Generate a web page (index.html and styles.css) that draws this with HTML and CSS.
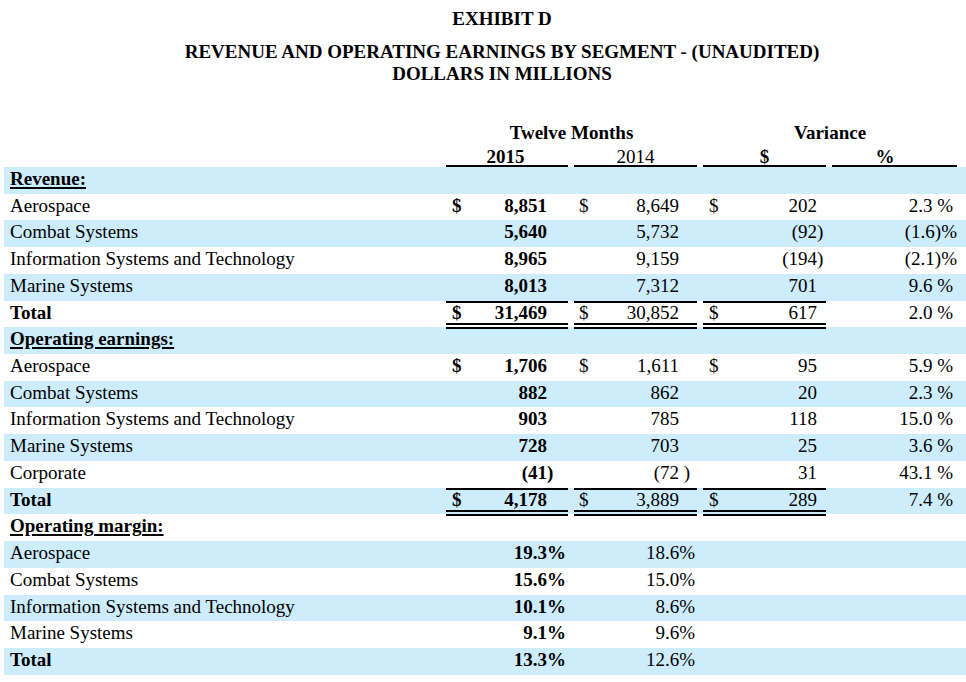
FILE: index.html
```html
<!DOCTYPE html>
<html lang="en">
<head>
<meta charset="utf-8">
<title>Exhibit D</title>
<link rel="stylesheet" href="styles.css">
</head>
<body>
<div class="page">
  <header class="title">
    <div class="exhibit">EXHIBIT D</div>
    <div class="sub">REVENUE AND OPERATING EARNINGS BY SEGMENT - (UNAUDITED)<br>DOLLARS IN MILLIONS</div>
  </header>

  <div class="table">
    <div class="hrow hrow1">
      <div class="h-tm">Twelve Months</div>
      <div class="h-var">Variance</div>
    </div>
    <div class="hrow hrow2">
      <div class="hc c1 h15">2015</div>
      <div class="hc c2 h14">2014</div>
      <div class="hc c3 hd">$</div>
      <div class="hc c4 hp">%</div>
    </div>

    <div class="rows">
      <div class="row"><div class="lab sec">Revenue:</div></div>
      <div class="row"><div class="lab">Aerospace</div><div class="v c1"><span>$</span><span class="n">8,851</span></div><div class="v c2"><span>$</span><span class="n">8,649</span></div><div class="v c3"><span>$</span><span class="n">202</span></div><div class="v c4"><span class="n">2.3 %</span></div></div>
      <div class="row"><div class="lab">Combat Systems</div><div class="v c1"><span class="n">5,640</span></div><div class="v c2"><span class="n">5,732</span></div><div class="v c3"><span class="n">(92<span class="rp">)</span></span></div><div class="v c4 hang"><span class="n">(1.6)%</span></div></div>
      <div class="row"><div class="lab">Information Systems and Technology</div><div class="v c1"><span class="n">8,965</span></div><div class="v c2"><span class="n">9,159</span></div><div class="v c3"><span class="n">(194<span class="rp">)</span></span></div><div class="v c4 hang"><span class="n">(2.1)%</span></div></div>
      <div class="row"><div class="lab">Marine Systems</div><div class="v c1"><span class="n">8,013</span></div><div class="v c2"><span class="n">7,312</span></div><div class="v c3"><span class="n">701</span></div><div class="v c4"><span class="n">9.6 %</span></div></div>
      <div class="row tot"><div class="lab b">Total</div><div class="v c1"><span>$</span><span class="n">31,469</span></div><div class="v c2"><span>$</span><span class="n">30,852</span></div><div class="v c3"><span>$</span><span class="n">617</span></div><div class="v c4"><span class="n">2.0 %</span></div></div>

      <div class="row"><div class="lab sec">Operating earnings:</div></div>
      <div class="row"><div class="lab">Aerospace</div><div class="v c1"><span>$</span><span class="n">1,706</span></div><div class="v c2"><span>$</span><span class="n">1,611</span></div><div class="v c3"><span>$</span><span class="n">95</span></div><div class="v c4"><span class="n">5.9 %</span></div></div>
      <div class="row"><div class="lab">Combat Systems</div><div class="v c1"><span class="n">882</span></div><div class="v c2"><span class="n">862</span></div><div class="v c3"><span class="n">20</span></div><div class="v c4"><span class="n">2.3 %</span></div></div>
      <div class="row"><div class="lab">Information Systems and Technology</div><div class="v c1"><span class="n">903</span></div><div class="v c2"><span class="n">785</span></div><div class="v c3"><span class="n">118</span></div><div class="v c4"><span class="n">15.0 %</span></div></div>
      <div class="row"><div class="lab">Marine Systems</div><div class="v c1"><span class="n">728</span></div><div class="v c2"><span class="n">703</span></div><div class="v c3"><span class="n">25</span></div><div class="v c4"><span class="n">3.6 %</span></div></div>
      <div class="row"><div class="lab">Corporate</div><div class="v c1"><span class="n">(41<span class="rp">)</span></span></div><div class="v c2"><span class="n">(72<span class="rp2">&nbsp;)</span></span></div><div class="v c3"><span class="n">31</span></div><div class="v c4"><span class="n">43.1 %</span></div></div>
      <div class="row tot"><div class="lab b">Total</div><div class="v c1"><span>$</span><span class="n">4,178</span></div><div class="v c2"><span>$</span><span class="n">3,889</span></div><div class="v c3"><span>$</span><span class="n">289</span></div><div class="v c4"><span class="n">7.4 %</span></div></div>

      <div class="row"><div class="lab sec">Operating margin:</div></div>
      <div class="row pct"><div class="lab">Aerospace</div><div class="v c1"><span class="n">19.3%</span></div><div class="v c2"><span class="n">18.6%</span></div></div>
      <div class="row pct"><div class="lab">Combat Systems</div><div class="v c1"><span class="n">15.6%</span></div><div class="v c2"><span class="n">15.0%</span></div></div>
      <div class="row pct"><div class="lab">Information Systems and Technology</div><div class="v c1"><span class="n">10.1%</span></div><div class="v c2"><span class="n">8.6%</span></div></div>
      <div class="row pct"><div class="lab">Marine Systems</div><div class="v c1"><span class="n">9.1%</span></div><div class="v c2"><span class="n">9.6%</span></div></div>
      <div class="row pct"><div class="lab b">Total</div><div class="v c1"><span class="n">13.3%</span></div><div class="v c2"><span class="n">12.6%</span></div></div>
    </div>
  </div>
</div>
</body>
</html>
```

FILE: styles.css
```css
html, body {
  margin: 0;
  padding: 0;
  background: #ffffff;
}

body {
  font-family: "Liberation Serif", "Times New Roman", serif;
  font-size: 19px;
  color: #000000;
}

.page {
  width: 966px;
  padding: 0 0 0 4px;
  box-sizing: border-box;
}

/* ---------- title ---------- */
.title {
  padding-top: 8px;
  padding-left: 34px;
  text-align: center;
  font-weight: bold;
  line-height: 22px;
}

.exhibit {
  margin-bottom: 11px;
}

/* ---------- table ---------- */
.table {
  margin-top: 37px;
}

.hrow,
.row {
  display: grid;
  grid-template-columns: 442px 122px 6px 123px 6px 123px 6px 125px;
}

.hrow1 {
  height: 22px;
  line-height: 22px;
  font-weight: bold;
  text-align: center;
}

.h-tm {
  grid-column: 2 / 5;
}

.h-var {
  grid-column: 6 / 9;
}

.hrow2 {
  margin-top: 5px;
  line-height: 16px;
}

.hc {
  text-align: center;
  border-bottom: 2px solid #000000;
}

.h15 {
  font-weight: bold;
  padding-right: 3px;
}

.hd {
  font-weight: bold;
}

.hp {
  font-weight: bold;
  padding-right: 19px;
}

.rows .row {
  grid-template-rows: 26.72px;
  height: 26.72px;
  line-height: 24px;
}

.rows .row:nth-child(odd) {
  background: #cdecfc;
}

.lab {
  grid-column: 1;
  padding-left: 6px;
  white-space: nowrap;
}

.b,
.sec {
  font-weight: bold;
}

.sec {
  text-decoration: underline;
  text-decoration-thickness: 2px;
  text-underline-offset: 2px;
}

.c1 { grid-column: 2; }
.c2 { grid-column: 4; }
.c3 { grid-column: 6; }
.c4 { grid-column: 8; }

.v {
  display: flex;
  white-space: nowrap;
}

.v .n {
  margin-left: auto;
}

.v.c1 {
  padding: 0 21px 0 6px;
  font-weight: bold;
}

.v.c2 {
  padding: 0 18px 0 5px;
}

.v.c3 {
  padding: 0 9px 0 6px;
}

.v.c4 {
  padding-right: 4px;
}

.v.c4.hang {
  padding-right: 0;
}

.pct .v.c1,
.pct .v.c2 {
  padding-right: 2px;
}

.rp {
  margin-right: -0.333em;
}

.rp2 {
  margin-right: -0.583em;
}

.tot .v.c1,
.tot .v.c2,
.tot .v.c3 {
  box-sizing: border-box;
  height: 28.72px;
  line-height: 20px;
  border-top: 2px solid #000000;
  border-bottom: 6px double #000000;
}
```
